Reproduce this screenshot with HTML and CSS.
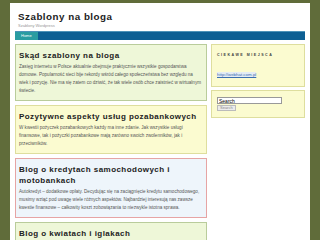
FILE: index.html
```html
<!DOCTYPE html>
<html>
<head>
    <meta charset="utf-8">
    <link rel="stylesheet" href="styles.css">
</head>
<body>
    <div class="page">
        <div class="header">
            <h1>Szablony na bloga</h1>
            <div class="tagline">Szablony Wordpress</div>
        </div>

        <div class="nav">
            <a class="current" href="#">Home</a>
        </div>

        <div class="main">
            <div class="content">
                <div class="post green">
                    <h2>Skąd szablony na bloga</h2>
                    <p>Zasięg internetu w Polsce aktualnie obejmuje praktycznie wszystkie gospodarstwa domowe. Popularność sieci bije rekordy wśród całego społeczeństwa bez względu na wiek i pozycję. Nie ma się zatem co dziwić, że tak wiele osób chce zaistnieć w wirtualnym świecie.</p>
                </div>

                <div class="post yellow">
                    <h2>Pozytywne aspekty usług pozabankowych</h2>
                    <p>W kwestii pożyczek pozabankowych każdy ma inne zdanie. Jak wszystkie usługi finansowe, tak i pożyczki pozabankowe mają zarówno swoich zwolenników, jak i przeciwników.</p>
                </div>

                <div class="post blue">
                    <h2>Blog o kredytach samochodowych i motobankach</h2>
                    <p>Autokredyt – dodatkowe opłaty. Decydując się na zaciągnięcie kredytu samochodowego, musimy wziąć pod uwagę wiele różnych aspektów. Najbardziej interesują nas zawsze kwestie finansowe – całkowity koszt zobowiązania to niezwykle istotna sprawa.</p>
                </div>

                <div class="post green">
                    <h2>Blog o kwiatach i iglakach</h2>
                    <p>Kwiaty i iglaki to doskonały sposób na ozdobienie każdego ogrodu.</p>
                </div>
            </div>

            <div class="sidebar">
                <div class="widget">
                    <h3>Ciekawe miejsca</h3>
                    <a class="link" href="#">http://webhat.com.pl</a>
                </div>
                <div class="widget">
                    <input type="text" value="Search">
                    <button>Search</button>
                </div>
            </div>
        </div>
    </div>
</body>
</html>
```

FILE: styles.css
```css
body {
    margin: 0;
    background: #606c3a;
    font-family: 'Liberation Sans', Arial, sans-serif;
    color: #333;
}

.page {
    width: 290px;
    margin: 3px 0 0 10px;
    padding: 0 5px 10px 5px;
    background: #fff;
}

.header {
    padding: 9px 0 3px 3px;
}

.header h1 {
    margin: 0;
    font-size: 9.8px;
    line-height: 10px;
    letter-spacing: 0.5px;
    color: #222;
}

.tagline {
    margin-top: 2px;
    font-size: 4px;
    line-height: 4px;
    color: #999;
}

.nav {
    display: flex;
    height: 8px;
    background: #0d5f93;
    border-top: 1px solid #4d92b8;
}

.nav a {
    display: block;
    padding: 0 6px;
    font-size: 4px;
    line-height: 8px;
    color: #fff;
    text-decoration: none;
}

.nav a.current {
    background: #2a9ca1;
}

.main {
    display: flex;
    gap: 4px;
    margin-top: 4px;
}

.content {
    display: flex;
    flex-direction: column;
    gap: 4px;
    width: 192px;
}

.post {
    padding: 5px 3px 5px 3px;
    border: 1px solid #b9cc9b;
}

.post.green {
    background: #eef7d8;
}

.post.yellow {
    background: #fbfbd0;
    border-color: #dede9e;
}

.post.blue {
    background: #eef5fb;
    border-color: #e6a4a4;
}

.post h2 {
    margin: 0 0 2px 0;
    font-size: 8px;
    line-height: 11px;
    letter-spacing: 0.45px;
    color: #222;
}

.post p {
    margin: 0;
    font-size: 4.6px;
    line-height: 8px;
    color: #555;
}

.sidebar {
    display: flex;
    flex-direction: column;
    gap: 3px;
    width: 94px;
}

.widget {
    padding: 6px 5px 6px 5px;
    background: #fbfbd0;
    border: 1px solid #dede9e;
}

.widget h3 {
    margin: 2px 0 5px 0;
    font-size: 3.6px;
    letter-spacing: 1.5px;
    text-transform: uppercase;
    color: #444;
}

.link {
    font-size: 4.4px;
    color: #3b6fb0;
    background: #e4ecf4;
}

.widget input {
    display: block;
    width: 65px;
    height: 7px;
    margin: 0;
    padding: 0 1px;
    border: 1px solid #999;
    font-family: 'Liberation Sans', Arial, sans-serif;
    font-size: 5px;
    box-sizing: border-box;
}

.widget button {
    display: block;
    height: 6px;
    margin-top: 1px;
    padding: 0 2px;
    border: 1px solid #bbb;
    background: #ececec;
    font-size: 4px;
    line-height: 4px;
    color: #888;
}
```
